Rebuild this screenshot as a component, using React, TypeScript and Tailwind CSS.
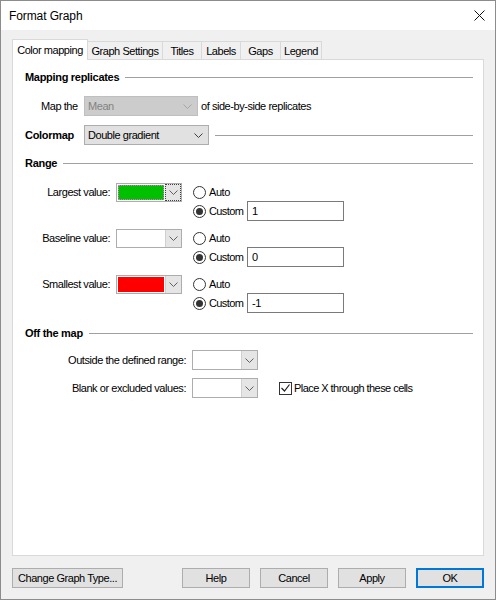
import clsx from 'clsx'

const Chevron = ({ className = '' }: { className?: string }) => (
  <svg width="9" height="5" viewBox="0 0 9 5" className={className}>
    <path d="M0.5 0.5 L4.5 4.5 L8.5 0.5" fill="none" stroke="currentColor" strokeWidth="1" />
  </svg>
)

const SectionTitle = ({ title, className }: { title: string; className?: string }) => (
  <div className={clsx('flex h-4 items-center gap-[6px]', className)}>
    <span className="font-bold tracking-[-0.3px]">{title}</span>
    <div className="h-px flex-1 bg-[#a0a0a0]" />
  </div>
)

const Select = ({
  value,
  width,
  disabled,
}: {
  value?: string
  width: string
  disabled?: boolean
}) => (
  <div
    className={clsx(
      'flex h-5 items-center justify-between border pl-[3px] pr-[5px]',
      width,
      disabled ? 'border-[#bfbfbf] bg-[#cccccc] text-[#838383]' : 'border-[#adadad] bg-[#e1e1e1]',
    )}
  >
    <span>{value}</span>
    <Chevron className={disabled ? 'text-[#a6a6a6]' : 'text-[#404040]'} />
  </div>
)

const DropBox = ({ width = 'w-[66px]' }: { width?: string }) => (
  <div className={clsx('flex h-5 border border-[#adadad] bg-white', width)}>
    <div className="flex-1" />
    <div className="flex w-[16px] items-center justify-center border-l border-[#d0d0d0] bg-[#e5e5e5] text-[#606060]">
      <Chevron />
    </div>
  </div>
)

const ColorPicker = ({ fill, focused }: { fill?: string; focused?: boolean }) => (
  <div className="flex h-[19px] w-[66px] border border-[#adadad] bg-white">
    <div className="flex-1 p-px">
      {fill && (
        <div className={clsx('h-full w-full', fill, focused && 'border border-dotted border-[#e070e0]')} />
      )}
    </div>
    <div
      className={clsx(
        'flex w-[16px] items-center justify-center bg-[#e5e5e5] text-[#606060]',
        focused ? 'border border-dotted border-[#404040]' : 'border-l border-[#d0d0d0]',
      )}
    >
      <Chevron />
    </div>
  </div>
)

const Radio = ({ checked }: { checked?: boolean }) => (
  <span className="flex size-[13px] shrink-0 items-center justify-center rounded-full border border-[#333333] bg-white">
    {checked && <span className="size-[7px] rounded-full bg-[#333333]" />}
  </span>
)

const RangeRow = ({
  label,
  fill,
  value,
  focused,
  className,
}: {
  label: string
  fill?: string
  value: string
  focused?: boolean
  className?: string
}) => (
  <div className={clsx('flex', className)}>
    <div className="flex h-5 items-center">
      <span className="w-[85px] text-right">{label}</span>
      <div className="ml-[6px]">
        <ColorPicker fill={fill} focused={focused} />
      </div>
    </div>
    <div className="ml-[11px] flex flex-col">
      <label className="flex h-5 items-center gap-[3px]">
        <Radio />
        Auto
      </label>
      <div className="-mt-px flex h-5 items-center">
        <label className="flex w-[54px] items-center gap-[3px] tracking-[-0.6px]">
          <Radio checked />
          Custom
        </label>
        <div className="flex h-5 w-[97px] items-center border border-[#7a7a7a] bg-white px-[4px]">
          {value}
        </div>
      </div>
    </div>
  </div>
)

const tabs = [
  { name: 'Color mapping', w: 'w-[76px]' },
  { name: 'Graph Settings', w: 'w-[75px]' },
  { name: 'Titles', w: 'w-[39px]' },
  { name: 'Labels', w: 'w-[39px]' },
  { name: 'Gaps', w: 'w-[40px]' },
  { name: 'Legend', w: 'w-[41px]' },
]

const Button = ({ children, className }: { children: React.ReactNode; className?: string }) => (
  <button
    type="button"
    className={clsx('flex h-5 items-center justify-center border bg-[#e1e1e1]', className)}
  >
    {children}
  </button>
)

export default function App() {
  return (
    <div className="flex h-[600px] w-[496px] flex-col border border-[#8c8c8c] bg-[#f0f0f0] font-['Liberation_Sans',Arial,sans-serif] text-[11px] tracking-[-0.45px] text-black">
      {/* title bar */}
      <div className="flex h-[29px] shrink-0 items-center justify-between bg-white pl-[8px] pr-[10px]">
        <span className="text-[12px] tracking-[-0.1px]">Format Graph</span>
        <svg width="11" height="11" viewBox="0 0 11 11">
          <path d="M0.5 0.5 L10.5 10.5 M10.5 0.5 L0.5 10.5" stroke="#111" strokeWidth="1" />
        </svg>
      </div>

      {/* tabs */}
      <div className="mt-[9px] flex h-[20px] items-end pl-[11px]">
        {tabs.map((t, i) =>
          i === 0 ? (
            <div
              key={t.name}
              className={clsx(
                'relative z-10 -mb-px flex h-[21px] items-start justify-center border border-b-0 border-[#d9d9d9] bg-white pt-[2px]',
                t.w,
              )}
            >
              {t.name}
            </div>
          ) : (
            <div
              key={t.name}
              className={clsx(
                'flex h-[18px] items-center justify-center border border-l-0 border-b-0 border-[#d9d9d9] bg-[#f0f0f0] pt-px',
                t.w,
              )}
            >
              {t.name}
            </div>
          ),
        )}
      </div>

      {/* tab page */}
      <div className="mx-[11px] h-[497px] shrink-0 border border-[#d9d9d9] bg-white pl-[12px] pr-[10px] pt-[9px]">
        <SectionTitle title="Mapping replicates" />

        <div className="mt-[11px] flex items-center pl-[16px]">
          <span className="w-[43px]">Map the</span>
          <Select value="Mean" width="w-[114px]" disabled />
          <span className="ml-[3px]">of side-by-side replicates</span>
        </div>

        <div className="mt-[9px] flex items-center">
          <span className="w-[59px] font-bold tracking-[-0.3px]">Colormap</span>
          <Select value="Double gradient" width="w-[125px]" />
          <div className="ml-[6px] h-px flex-1 bg-[#a0a0a0]" />
        </div>

        <SectionTitle title="Range" className="mt-[10px]" />

        <RangeRow label="Largest value:" fill="bg-[#00c000]" value="1" focused className="mt-[11px]" />
        <RangeRow label="Baseline value:" value="0" className="mt-[7px]" />
        <RangeRow label="Smallest value:" fill="bg-[#ff0000]" value="-1" className="mt-[7px]" />

        <SectionTitle title="Off the map" className="mt-[12px]" />

        <div className="mt-[9px] flex items-center">
          <span className="w-[161px] text-right">Outside the defined range:</span>
          <div className="ml-[6px]">
            <DropBox />
          </div>
        </div>

        <div className="mt-[8px] flex items-center">
          <span className="w-[161px] text-right">Blank or excluded values:</span>
          <div className="ml-[6px]">
            <DropBox />
          </div>
          <label className="ml-[21px] flex items-center gap-[2px] tracking-[-0.55px]">
            <span className="flex size-[13px] items-center justify-center border border-[#333333] bg-white">
              <svg width="9" height="8" viewBox="0 0 9 8">
                <path d="M0.5 4 L3.5 7 L8.5 0.5" fill="none" stroke="#222" strokeWidth="1.2" />
              </svg>
            </span>
            Place X through these cells
          </label>
        </div>
      </div>

      {/* footer buttons */}
      <div className="mt-[12px] flex items-center pl-[11px] pr-[11px]">
        <Button className="w-[111px] border-[#adadad]">Change Graph Type...</Button>
        <div className="flex-1" />
        <div className="flex gap-[10px]">
          <Button className="w-[68px] border-[#adadad]">Help</Button>
          <Button className="w-[68px] border-[#adadad]">Cancel</Button>
          <Button className="w-[68px] border-[#adadad]">Apply</Button>
          <Button className="w-[68px] border-2 border-[#0078d7]">OK</Button>
        </div>
      </div>
    </div>
  )
}
